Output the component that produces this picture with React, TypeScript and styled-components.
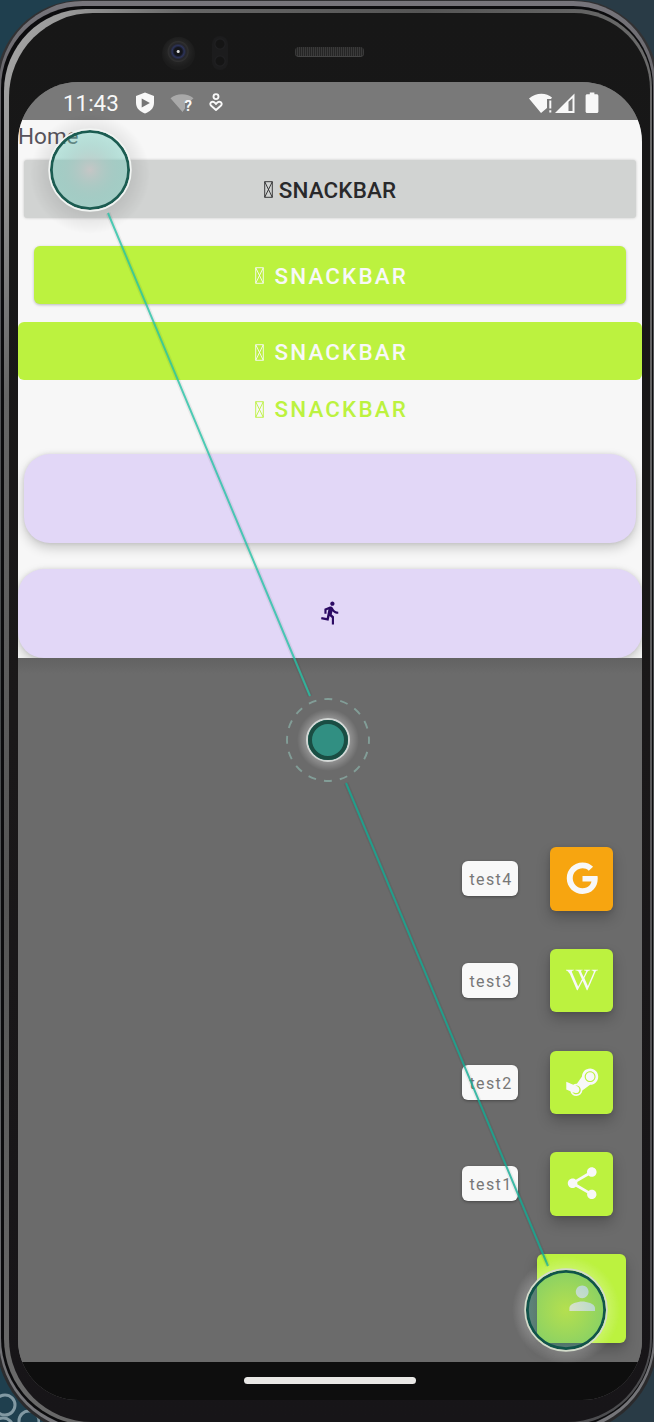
import React from 'react';
import styled, { createGlobalStyle, css } from 'styled-components';
import { FaGoogle, FaSteamSymbol, FaWikipediaW } from 'react-icons/fa';
import { MdDirectionsRun, MdPerson, MdShare } from 'react-icons/md';

const lime = '#bcf23f';

const GlobalStyle = createGlobalStyle`
  * { box-sizing: border-box; }
  html, body { margin: 0; background: #203c4a; }
  body { font-family: Roboto, "Liberation Sans", sans-serif; overflow: hidden; }
`;

const Stage = styled.div`
  position: relative;
  width: 654px;
  height: 1422px;
  overflow: hidden;
  background: linear-gradient(90deg, #1f3f4e 0 50%, #293b46 50% 100%);
`;

const Wallpaper = styled.svg`
  position: absolute;
  left: 0;
  bottom: 0;
`;

const Device = styled.div`
  position: relative;
  width: 662px;
  height: 1435px;
  margin-left: -4px;
  padding: 1px 3px 3px;
  border-radius: 86px 84px 96px 96px;
  background: linear-gradient(180deg, #303032, #454548 30%, #29292b);
`;

const SilverRim = styled.div`
  height: 100%;
  padding: 5px 2px 4px 2px;
  border-radius: 84px 82px 93px 93px;
  background: linear-gradient(180deg, #77757b 0, #5c5c60 10%, #444749 50%, #77777b 100%);
`;

const DarkRim = styled.div`
  height: 100%;
  padding: 3px 1px 3px 3px;
  border-radius: 82px 80px 90px 90px;
  background: #0c0c0e;
`;

const InnerRim = styled.div`
  height: 100%;
  padding: 4px 2px 3px 5px;
  border-radius: 82px 78px 86px 86px;
  background: linear-gradient(115deg, #a8a8a8 0, #999 5%, #666 14%, #555 32%, #6a6a6a 50%, #4a4a4d 100%);
`;

const Bezel = styled.div`
  position: relative;
  height: 100%;
  padding: 69px 9px 0;
  border-radius: 84px 76px 83px 83px;
  background: linear-gradient(180deg, #171717, #1a1819 50%, #171518);
`;

const Camera = styled.div`
  position: absolute;
  left: 153px;
  top: 24px;
  width: 33px;
  height: 33px;
  border-radius: 50%;
  background: radial-gradient(circle at 49% 44%, #ddd 0 1px, #14151b 2px 4px, #2c335a 6px, #252529 8px, #303030 10px, #242424 11px, #1c1c1c 16px);
`;

const Sensor = styled.div`
  position: absolute;
  left: 203px;
  top: 23px;
  width: 16px;
  height: 34px;
  border-radius: 8px;
  background:
    radial-gradient(circle at 8px 8px, #151515 0 4px, #202022 5px, transparent 6px),
    radial-gradient(circle at 8px 25px, #151515 0 4px, #202022 5px, transparent 6px),
    #1c1c1d;
`;

const Speaker = styled.div`
  position: absolute;
  left: 286px;
  top: 34px;
  width: 69px;
  height: 10px;
  border-radius: 4px;
  border-bottom: 1px solid #454545;
  background: repeating-linear-gradient(90deg, #3a3a3a 0 1px, #252525 1px 2px);
`;

const Screen = styled.div`
  width: 624px;
  height: 1318px;
  border-radius: 60px;
  overflow: hidden;
  background: #6b6b6b;
  display: flex;
  flex-direction: column;
`;

const StatusBar = styled.header`
  height: 38px;
  flex: none;
  display: flex;
  align-items: center;
  padding: 3px 43px 0 45px;
  background: #797979;
  color: #f8f8f8;
`;

const Clock = styled.span`
  width: 72px;
  font-size: 22.4px;
`;

const StatusIcons = styled.div<{ $end?: boolean }>`
  display: flex;
  align-items: center;
  gap: 15px;
  margin-left: ${p => (p.$end ? 'auto' : '0')};
  svg { display: block; }
`;

const Content = styled.main`
  height: 538px;
  flex: none;
  overflow: hidden;
  display: flex;
  flex-direction: column;
  background: #f7f7f7;
`;

const Title = styled.div`
  height: 40px;
  flex: none;
  font-size: 22.5px;
  line-height: 33px;
  color: #58545c;
`;

type Variant = 'plain' | 'raised' | 'flat' | 'text';

const variants = {
  plain: css`
    height: 58px;
    margin: 0 6px 28px;
    padding: 1px 0 0;
    border-radius: 3px;
    background: #d1d3d2;
    color: #29292b;
    box-shadow: 0 0 3px rgba(0, 0, 0, 0.2);
    letter-spacing: 0.15px;
    gap: 6px;
  `,
  raised: css`
    height: 57.5px;
    margin: 0 16px 18.5px;
    border-radius: 6px;
    background: ${lime};
    color: #f8f8f8;
    box-shadow: 0 1px 3px rgba(0, 0, 0, 0.25);
  `,
  flat: css`
    height: 58px;
    border-radius: 6px;
    background: ${lime};
    color: #f8f8f8;
  `,
  text: css`
    height: 58px;
    margin-bottom: 16.3px;
    padding-top: 0;
    background: transparent;
    color: ${lime};
  `,
};

const Button = styled.button<{ $variant: Variant }>`
  flex: none;
  display: flex;
  align-items: center;
  justify-content: center;
  gap: 10.5px;
  border: 0;
  padding: 2px 0 0 3px;
  font: 500 22.4px Roboto, sans-serif;
  letter-spacing: 2.15px;
  ${p => variants[p.$variant]}
`;

const ExtendedFab = styled.button<{ $wide?: boolean }>`
  flex: none;
  height: 89px;
  margin: ${p => (p.$wide ? '0' : '0 6px 26px')};
  padding: 0 0 2px 1px;
  border: 0;
  border-radius: 26px;
  background: #e2d7f7;
  color: #2b0a63;
  box-shadow: 0 5px 12px rgba(0, 0, 0, 0.19), 0 0 4px rgba(0, 0, 0, 0.1);
  display: flex;
  align-items: center;
  justify-content: center;
`;

const Scrim = styled.section`
  flex: 1;
  display: flex;
  flex-direction: column;
  align-items: flex-end;
  justify-content: flex-end;
  gap: 38.2px;
  padding: 0 16px 19px;
  background: linear-gradient(180deg, #626262 0, #6b6b6b 16px);
`;

const DialRow = styled.div`
  display: flex;
  align-items: center;
  gap: 31.5px;
  margin-right: 13px;
`;

const DialLabel = styled.span`
  width: 56px;
  height: 35px;
  margin-bottom: 0.6px;
  border-radius: 6px;
  background: #f8f8f8;
  color: #777;
  font-size: 16px;
  line-height: 37px;
  text-align: center;
  letter-spacing: 1.35px;
  padding-left: 2px;
  box-shadow: 0 1px 3px rgba(0, 0, 0, 0.35);
`;

const DialButton = styled.button<{ $color?: string; $large?: boolean }>`
  width: ${p => (p.$large ? 89 : 63.5)}px;
  height: ${p => (p.$large ? 89 : 63.5)}px;
  padding: 0 0 1px 1px;
  border: 0;
  border-radius: 6px;
  background: ${p => p.$color ?? lime};
  color: #f8f8f8;
  box-shadow: 0 7px 14px rgba(0, 0, 0, 0.22), 0 1px 4px rgba(0, 0, 0, 0.12);
  display: flex;
  align-items: center;
  justify-content: center;
`;

const NavigationBar = styled.footer`
  height: 38px;
  flex: none;
  display: flex;
  align-items: center;
  justify-content: center;
  background: #0e0e0e;
`;

const HomeHandle = styled.div`
  width: 172px;
  height: 6.500px;
  margin-bottom: 1px;
  border-radius: 4px;
  background: #e9e8e6;
`;

const GestureOverlay = styled.svg`
  position: absolute;
  left: 0;
  top: 0;
`;

const MissingGlyph = () => (
  <svg width="9" height="17" viewBox="0 0 9 17" fill="none" stroke="currentColor" strokeWidth="0.9">
    <path d="M.7.7h7.6v15.6H.7zM.7.7l7.6 15.6M8.3.7.7 16.3" />
  </svg>
);

const ShieldIcon = () => (
  <svg width="20" height="22" viewBox="0 0 20 22">
    <path fill="#f8f8f8" d="M10 .5 19 4v7c0 5.2-4 8.8-9 10.5C5 19.800 1 16.200 1 11V4z" />
    <path fill="#757575" d="m6.700 6.500 8.200 4.500-8.200 4.500z" />
  </svg>
);

const WifiUnknownIcon = () => (
  <svg width="24" height="20" viewBox="0 0 24 20">
    <path fill="#a9a9a9" d="M.5 5.200C6.500-.2 17.500-.2 23.500 5.200L20 8.500h-5v7L12.500 19z" />
    <text x="14.500" y="17.500" fontFamily="Roboto" fontWeight="700" fontSize="15" fill="#f8f8f8">?</text>
  </svg>
);

const HeartPersonIcon = () => (
  <svg width="14" height="19" viewBox="0 0 14 19" fill="none" stroke="#f8f8f8" strokeWidth="1.9">
    <circle cx="7" cy="3.600" r="2.500" />
    <path strokeLinejoin="round" d="M7 17 2.200 12.800C.4 11 1.600 8.700 3.700 8.700c1.500 0 2.200 1.100 3.300 2.300 1.100-1.200 1.800-2.300 3.300-2.300 2.100 0 3.300 2.300 1.500 4.100z" />
  </svg>
);

const ConnectivityIcons = () => (
  <svg width="70" height="22" viewBox="0 0 70 22" fill="#f8f8f8">
    <path d="M0 6.500C6.500.2 17.500.2 23 5.500L22 7h-4v9l-6 5z" />
    <path d="M20.300 8.500h2v8h-2zM20.300 18.300h2v2.200h-2z" />
    <path fillRule="evenodd" d="M45.500 1.500v19.500H26zM39.500 9.800v9.200h4V6.200z" />
    <path d="M60.800.5h4.600v1.800h2.200c1 0 1.800.6 1.800 1.600v15.600c0 .9-.7 1.500-1.600 1.500h-9.600c-.9 0-1.600-.6-1.600-1.500V3.900c0-1 .7-1.600 1.700-1.600h2.500z" />
  </svg>
);

const dialItems = [
  { label: 'test4', color: '#f7a510', icon: <FaGoogle size={32.5} /> },
  { label: 'test3', icon: <FaWikipediaW size={32} /> },
  { label: 'test2', icon: <FaSteamSymbol size={36.5} /> },
  { label: 'test1', icon: <MdShare size={38.4} /> },
];

const buttonVariants: Variant[] = ['plain', 'raised', 'flat', 'text'];

export default function App() {
  return (
    <Stage>
      <GlobalStyle />
      <Wallpaper width="40" height="55" fill="none" stroke="#8299a3" strokeWidth="3">
        <circle cx="5" cy="38" r="10" />
        <circle cx="29" cy="54" r="10" />
        <circle cx="3" cy="61" r="10" />
      </Wallpaper>
      <Device>
        <SilverRim>
          <DarkRim>
            <InnerRim>
              <Bezel>
                <Camera />
                <Sensor />
                <Speaker />
                <Screen>
                  <StatusBar>
                    <Clock>11:43</Clock>
                    <StatusIcons>
                      <ShieldIcon />
                      <WifiUnknownIcon />
                      <HeartPersonIcon />
                    </StatusIcons>
                    <StatusIcons $end>
                      <ConnectivityIcons />
                    </StatusIcons>
                  </StatusBar>
                  <Content>
                    <Title>Home</Title>
                    {buttonVariants.map(variant => (
                      <Button key={variant} $variant={variant}>
                        <MissingGlyph />
                        <span>SNACKBAR</span>
                      </Button>
                    ))}
                    <ExtendedFab />
                    <ExtendedFab $wide>
                      <MdDirectionsRun size={25.6} />
                    </ExtendedFab>
                  </Content>
                  <Scrim>
                    {dialItems.map(item => (
                      <DialRow key={item.label}>
                        <DialLabel>{item.label}</DialLabel>
                        <DialButton $color={item.color}>{item.icon}</DialButton>
                      </DialRow>
                    ))}
                    <DialButton $large>
                      <MdPerson size={38.4} />
                    </DialButton>
                  </Scrim>
                  <NavigationBar>
                    <HomeHandle />
                  </NavigationBar>
                </Screen>
              </Bezel>
            </InnerRim>
          </DarkRim>
        </SilverRim>
      </Device>
      <GestureOverlay width="654" height="1422" fill="none">
        <defs>
          <radialGradient id="touchStart">
            <stop offset="0" stopColor="#c4c4c4" stopOpacity="0.85" />
            <stop offset="1" stopColor="#5cc4b2" stopOpacity="0.38" />
          </radialGradient>
          <radialGradient id="touchEnd">
            <stop offset="0" stopColor="#a5bd6d" stopOpacity="0.35" />
            <stop offset="1" stopColor="#48a495" stopOpacity="0.42" />
          </radialGradient>
          <radialGradient id="shade">
            <stop offset="0.65" stopColor="#000" stopOpacity="0.09" />
            <stop offset="1" stopColor="#000" stopOpacity="0" />
          </radialGradient>
          <radialGradient id="glow">
            <stop offset="0.65" stopColor="#fff" stopOpacity="0.3" />
            <stop offset="1" stopColor="#fff" stopOpacity="0" />
          </radialGradient>
          <mask id="outsideStart">
            <path d="M0 0h654v1422H0z" fill="#fff" />
            <circle cx="90" cy="170" r="40" fill="#000" />
          </mask>
          <mask id="outsideEnd">
            <path d="M0 0h654v1422H0z" fill="#fff" />
            <circle cx="566" cy="1310" r="40" fill="#000" />
          </mask>
        </defs>
        <circle cx="90" cy="174" r="60" fill="url(#shade)" mask="url(#outsideStart)" />
        <circle cx="90" cy="170" r="38" fill="url(#touchStart)" />
        <circle cx="90" cy="170" r="38.600" stroke="#1b5c51" strokeWidth="2.800" />
        <circle cx="90" cy="170" r="40.900" stroke="#f1f4f2" strokeWidth="1.700" />

        <g strokeWidth="5" stroke="#000" strokeOpacity="0.06">
          <path d="M108 213 310 696" />
          <path d="M346 783 548 1266" />
        </g>
        <path d="M108 213 310 696" stroke="#26c3a6" strokeOpacity="0.8" strokeWidth="2" />
        <path d="M346 783 548 1266" stroke="#12ad95" strokeOpacity="0.8" strokeWidth="2" />

        <circle cx="328" cy="740" r="41" stroke="#829d97" strokeWidth="1.900" strokeDasharray="8 8.100" strokeDashoffset="4" />
        <circle cx="328" cy="740" r="31" fill="url(#glow)" />
        <circle cx="328" cy="740" r="21" fill="#318f82" stroke="#d3d7d5" strokeWidth="2" />
        <circle cx="328" cy="740" r="18" stroke="#1a4d43" strokeWidth="4" />

        <circle cx="566" cy="1310" r="54" fill="url(#glow)" mask="url(#outsideEnd)" />
        <circle cx="566" cy="1310" r="38" fill="url(#touchEnd)" />
        <circle cx="566" cy="1310" r="38.600" stroke="#10544a" strokeWidth="2.800" />
        <circle cx="566" cy="1310" r="40.900" stroke="#d3dccb" strokeWidth="1.700" />
      </GestureOverlay>
    </Stage>
  );
}
